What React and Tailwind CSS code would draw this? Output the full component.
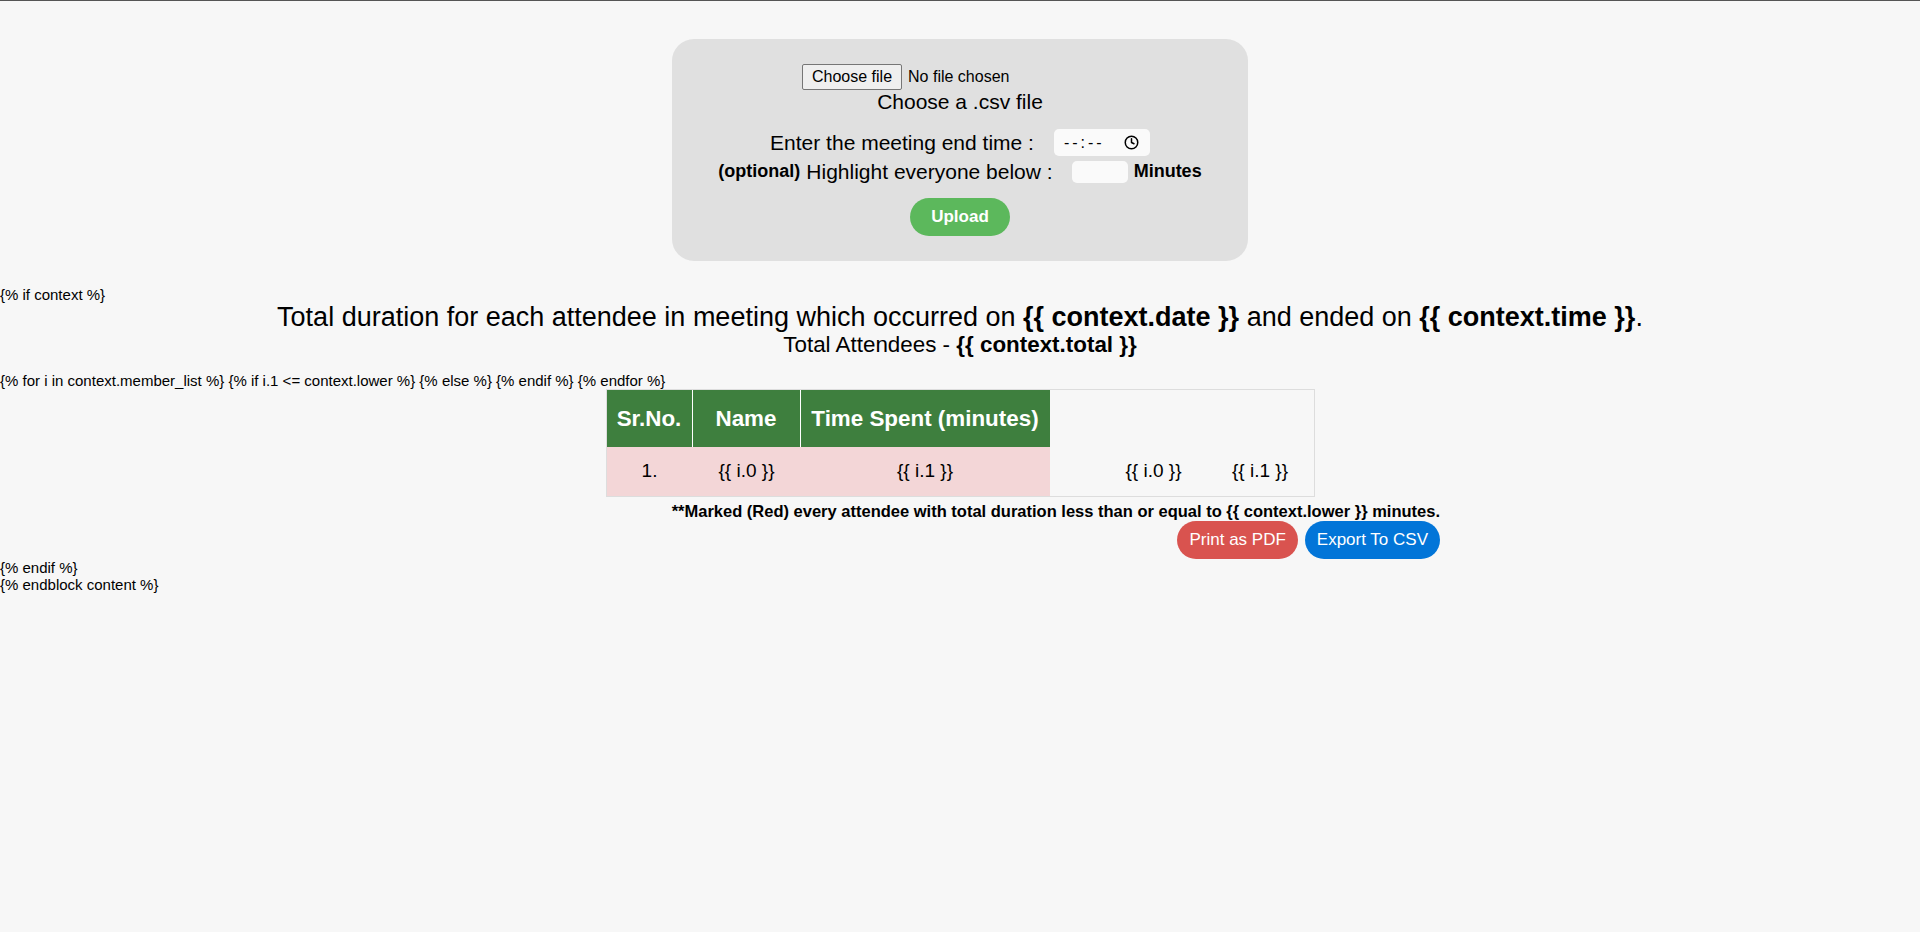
import React from 'react';
import { Clock } from 'lucide-react';

const FileField = () => (
  <div className="flex h-[26px] w-[316px] items-center text-[16px]">
    <button className="h-[26px] rounded-[2px] border border-[#767676] bg-[#efefef] px-[9px] leading-none">
      Choose file
    </button>
    <span className="ml-[6px]">No file chosen</span>
  </div>
);

export default function App() {
  return (
    <div className="min-h-screen bg-[#f7f7f7] font-['Liberation_Sans',Arial,sans-serif] text-black">
      <div className="h-px bg-[#555555]" />

      {/* upload form */}
      <form className="mx-auto mt-[38px] flex w-[576px] flex-col items-center rounded-[22px] bg-[#e0e0e0] pb-[25px] pt-[25px]">
        <FileField />
        <p className="text-[21px] leading-[24px]">Choose a .csv file</p>

        <div className="mt-[15px] flex items-center">
          <span className="text-[21px] leading-[24px]">Enter the meeting end time :</span>
          <div className="ml-[20px] flex h-[27px] w-[96px] items-center justify-between rounded-[5px] bg-[#fafafa] pl-[10px] pr-[11px] text-[16px]">
            <span className="tracking-[3px]">--:--</span>
            <Clock size={15} strokeWidth={2.4} />
          </div>
        </div>

        <div className="mt-[2px] flex items-center">
          <b className="text-[18px]">(optional)</b>
          <span className="ml-[6px] text-[21px] leading-[24px]">Highlight everyone below :</span>
          <div className="ml-[19px] h-[22px] w-[56px] rounded-[5px] bg-[#fafafa]" />
          <b className="ml-[6px] text-[18px]">Minutes</b>
        </div>

        <button
          type="button"
          className="mt-[13px] h-[38px] w-[100px] rounded-full bg-[#5cb85c] text-[17px] font-bold text-white"
        >
          Upload
        </button>
      </form>

      <div className="mt-[25px] text-[15px] leading-[17px]">{'{% if context %}'}</div>

      <h2 className="text-center text-[27px] leading-[29px]">
        Total duration for each attendee in meeting which occurred on <b>{'{{ context.date }}'}</b> and ended
        on <b>{'{{ context.time }}'}</b>.
      </h2>
      <h3 className="text-center text-[22.4px] leading-[26px]">
        Total Attendees - <b>{'{{ context.total }}'}</b>
      </h3>

      <div className="mt-[14px] text-[15px] leading-[17px]">
        {'{% for i in context.member_list %} {% if i.1 <= context.lower %} {% else %} {% endif %} {% endfor %}'}
      </div>

      <div className="mx-auto w-[960px]">
        <table className="mx-auto w-[709px] table-fixed border-separate border-spacing-0 border border-[#dddddd]">
          <colgroup>
            <col className="w-[86px]" />
            <col className="w-[108px]" />
            <col className="w-[249px]" />
            <col className="w-[157px]" />
            <col className="w-[107px]" />
          </colgroup>
          <thead>
            <tr className="h-[57px] text-[22.4px] font-bold text-white">
              <th className="border-r border-white bg-[#3e7f3e]">Sr.No.</th>
              <th className="border-r border-white bg-[#3e7f3e]">Name</th>
              <th className="bg-[#3e7f3e]">Time Spent (minutes)</th>
            </tr>
          </thead>
          <tbody>
            <tr className="h-[49px] text-[19px]">
              <td className="bg-[#f3d6d7] text-center">1.</td>
              <td className="bg-[#f3d6d7] text-center">{'{{ i.0 }}'}</td>
              <td className="bg-[#f3d6d7] text-center">{'{{ i.1 }}'}</td>
              <td className="pr-[25px] text-right">{'{{ i.0 }}'}</td>
              <td className="text-center">{'{{ i.1 }}'}</td>
            </tr>
          </tbody>
        </table>

        <p className="mt-[5px] text-right text-[16.5px] font-bold leading-[18px]">
          **Marked (Red) every attendee with total duration less than or equal to {'{{ context.lower }}'} minutes.
        </p>
        <div className="mt-px flex justify-end gap-[7px]">
          <button className="h-[38px] rounded-full bg-[#d9534f] px-[12px] text-[17px] text-white">Print as PDF</button>
          <button className="h-[38px] rounded-full bg-[#0275d8] px-[12px] text-[17px] text-white">Export To CSV</button>
        </div>
      </div>

      <div className="text-[15px] leading-[17px]">{'{% endif %}'}</div>
      <div className="text-[15px] leading-[17px]">{'{% endblock content %}'}</div>
    </div>
  );
}
